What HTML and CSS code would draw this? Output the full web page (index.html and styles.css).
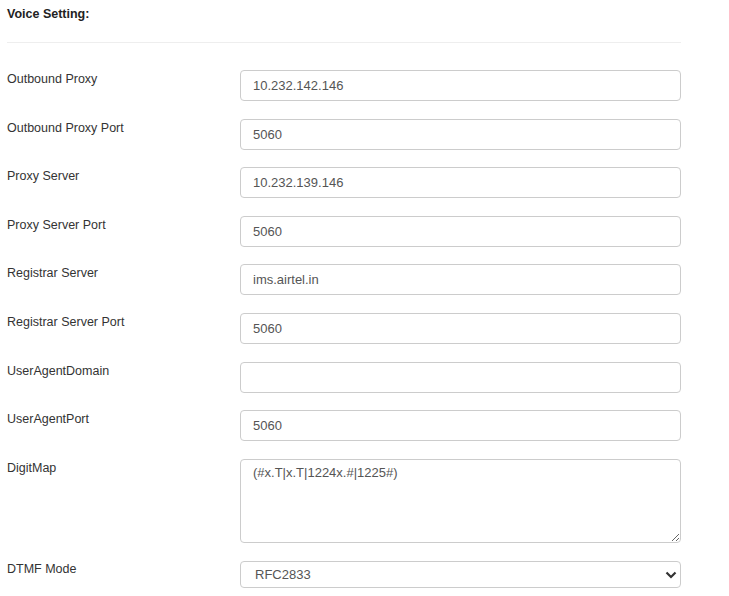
FILE: index.html
```html
<!DOCTYPE html>
<html lang="en">
<head>
    <meta charset="UTF-8">
    <meta name="viewport" content="width=device-width, initial-scale=1.0">
    <title>Voice Setting</title>
    <link rel="stylesheet" href="styles.css">
</head>
<body>
    <div class="panel">
        <h3 class="panel-title">Voice Setting:</h3>
        <hr class="divider">

        <form class="voice-form">
            <label class="field-label" for="outboundProxy">Outbound Proxy</label>
            <input class="field-input" id="outboundProxy" type="text" value="10.232.142.146">

            <label class="field-label" for="outboundProxyPort">Outbound Proxy Port</label>
            <input class="field-input" id="outboundProxyPort" type="text" value="5060">

            <label class="field-label" for="proxyServer">Proxy Server</label>
            <input class="field-input" id="proxyServer" type="text" value="10.232.139.146">

            <label class="field-label" for="proxyServerPort">Proxy Server Port</label>
            <input class="field-input" id="proxyServerPort" type="text" value="5060">

            <label class="field-label" for="registrarServer">Registrar Server</label>
            <input class="field-input" id="registrarServer" type="text" value="ims.airtel.in">

            <label class="field-label" for="registrarServerPort">Registrar Server Port</label>
            <input class="field-input" id="registrarServerPort" type="text" value="5060">

            <label class="field-label" for="userAgentDomain">UserAgentDomain</label>
            <input class="field-input" id="userAgentDomain" type="text" value="">

            <label class="field-label" for="userAgentPort">UserAgentPort</label>
            <input class="field-input" id="userAgentPort" type="text" value="5060">

            <label class="field-label" for="digitMap">DigitMap</label>
            <textarea class="field-input field-area" id="digitMap">(#x.T|x.T|1224x.#|1225#)</textarea>

            <label class="field-label" for="dtmfMode">DTMF Mode</label>
            <div class="select-wrap">
                <select class="field-input field-select" id="dtmfMode">
                    <option selected>RFC2833</option>
                    <option>INBAND</option>
                    <option>SIP INFO</option>
                </select>
                <svg class="select-arrow" width="12" height="8" viewBox="0 0 12 8">
                    <path d="M1.5 1.5 L6 6 L10.5 1.5" fill="none" stroke="#333" stroke-width="2.2"/>
                </svg>
            </div>
        </form>
    </div>
</body>
</html>
```

FILE: styles.css
```css
body {
    margin: 0;
    background-color: #fff;
    font-family: "Liberation Sans", Arial, sans-serif;
    color: #333;
}
.panel {
    width: 674px;
    padding: 7px 0 0 7px;
}
.panel-title {
    margin: 0;
    font-size: 12.5px;
    line-height: 14px;
    font-weight: bold;
    color: #222;
}
.divider {
    margin: 21px 0 0 0;
    border: 0;
    border-top: 1px solid #eee;
}
.voice-form {
    display: grid;
    grid-template-columns: 233px 441px;
    row-gap: 17.6px;
    margin-top: 27px;
}
.field-label {
    font-size: 12.5px;
    line-height: 14px;
    padding-top: 2px;
    color: #333;
}
.field-input {
    box-sizing: border-box;
    width: 100%;
    height: 31px;
    margin: 0;
    padding: 0 12px;
    border: 1px solid #ccc;
    border-radius: 4px;
    background-color: #fff;
    font-family: "Liberation Sans", Arial, sans-serif;
    font-size: 13px;
    color: #555;
    outline: none;
}
.field-area {
    height: 84px;
    padding-top: 5px;
    line-height: 16px;
    resize: vertical;
}
.select-wrap {
    position: relative;
    margin-top: 1px;
}
.field-select {
    height: 27px;
    padding-left: 14px;
    appearance: none;
    -webkit-appearance: none;
}
.select-arrow {
    position: absolute;
    right: 4px;
    top: 10px;
    pointer-events: none;
}
```
